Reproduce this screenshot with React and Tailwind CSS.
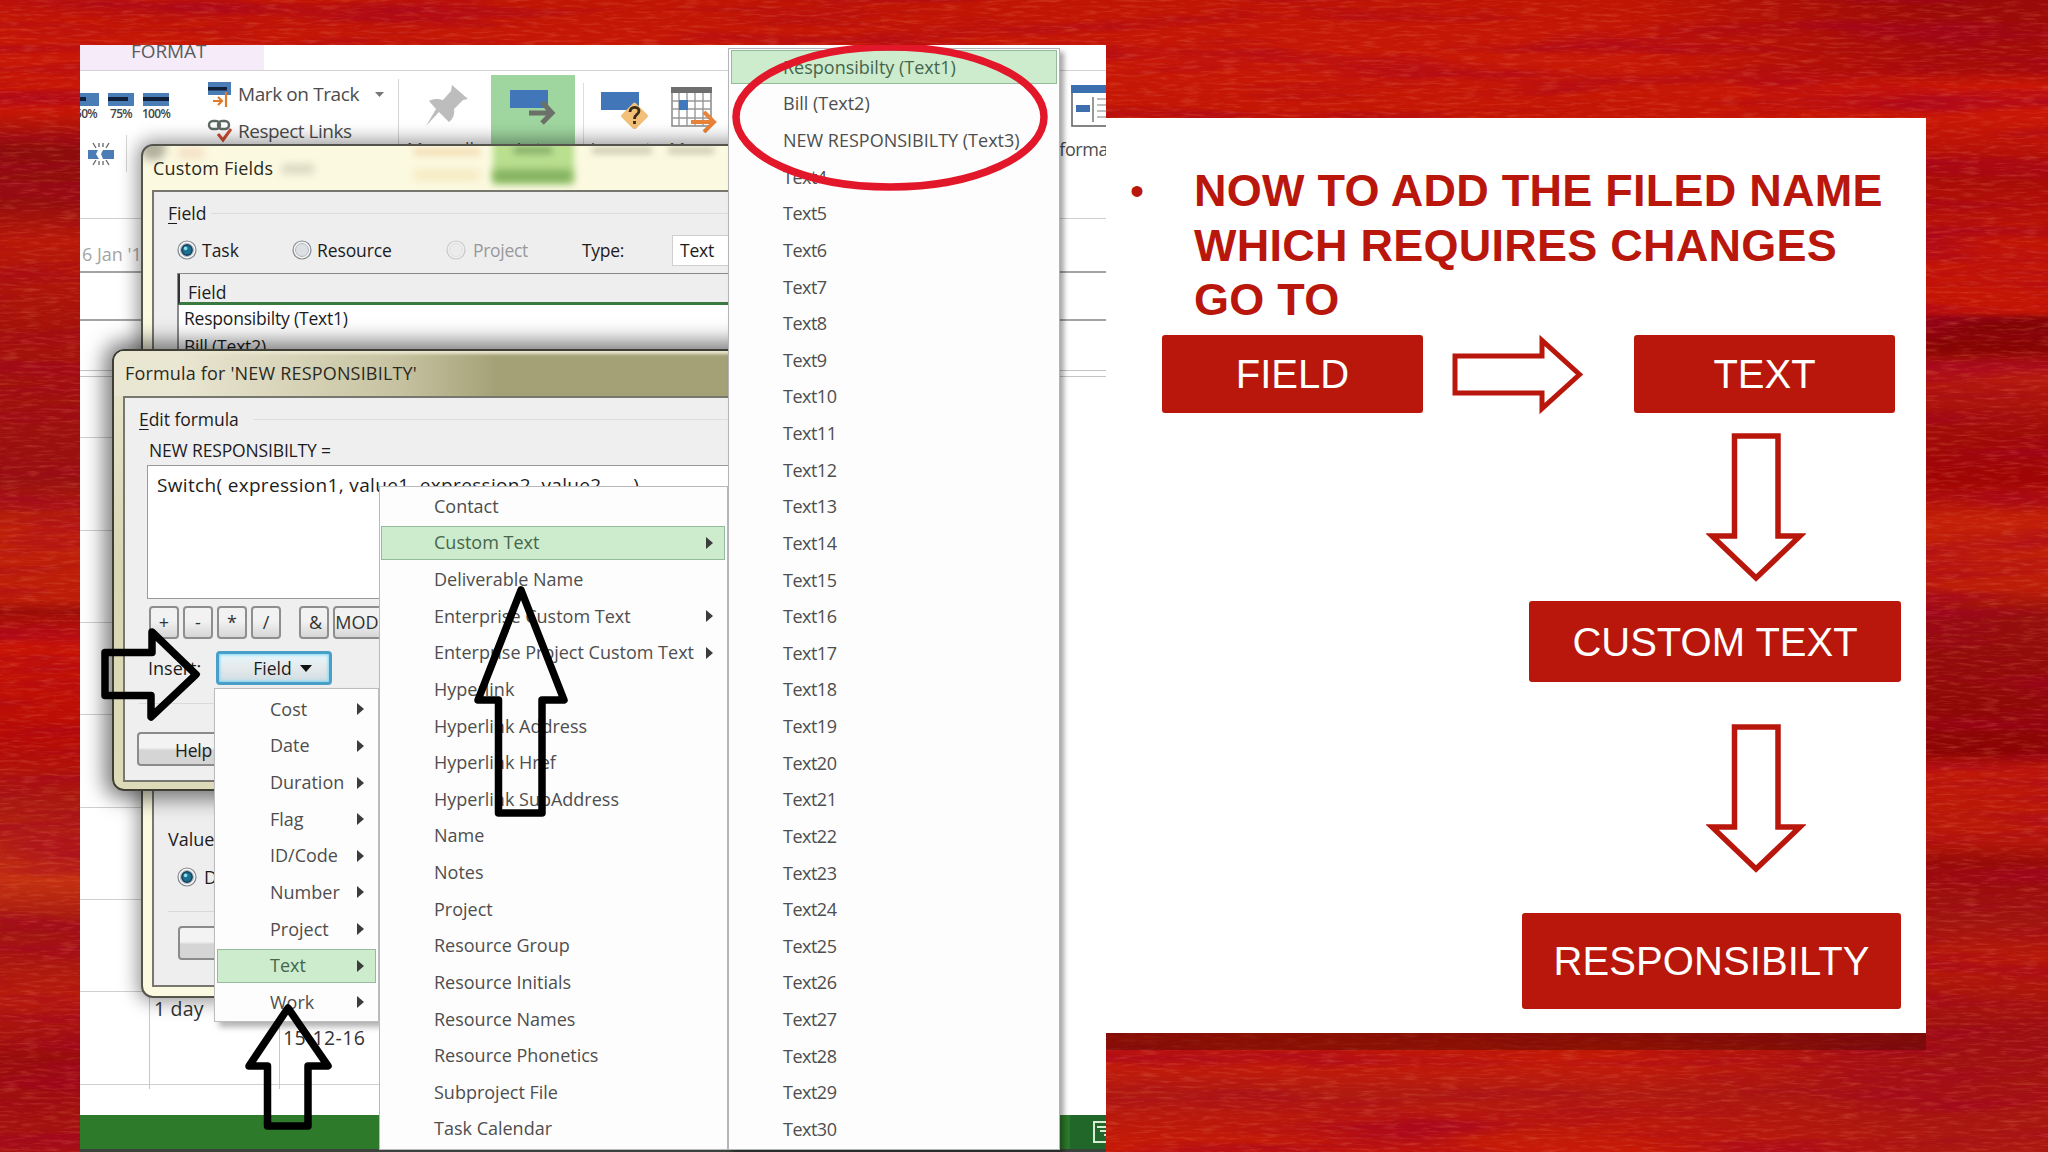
import clsx from "clsx";

const FIELD_MENU = ["Cost", "Date", "Duration", "Flag", "ID/Code", "Number", "Project", "Text", "Work"];

const TEXT_MENU = [
  { label: "Contact" },
  { label: "Custom Text", sub: true },
  { label: "Deliverable Name" },
  { label: "Enterprise Custom Text", sub: true },
  { label: "Enterprise Project Custom Text", sub: true },
  { label: "Hyperlink" },
  { label: "Hyperlink Address" },
  { label: "Hyperlink Href" },
  { label: "Hyperlink SubAddress" },
  { label: "Name" },
  { label: "Notes" },
  { label: "Project" },
  { label: "Resource Group" },
  { label: "Resource Initials" },
  { label: "Resource Names" },
  { label: "Resource Phonetics" },
  { label: "Subproject File" },
  { label: "Task Calendar" },
];

const CUSTOM_TEXT_MENU = [
  "Responsibilty (Text1)",
  "Bill (Text2)",
  "NEW RESPONSIBILTY (Text3)",
  ...Array.from({ length: 27 }, (_, i) => `Text${i + 4}`),
];

const GRID_LINES = [392, 485, 577, 669, 762, 854, 946, 1039];

function Caret() {
  return (
    <svg className="h-[12px] w-[7px]" viewBox="0 0 7 12" fill="#3c3c3c">
      <path d="M0 0L7 6L0 12Z" />
    </svg>
  );
}

function MenuItem({ children, active, sub, className }) {
  return (
    <div
      className={clsx(
        "flex h-[36.64px] items-center justify-between whitespace-nowrap text-[18px] text-[#4e4e4e]",
        className
      )}
    >
      <div
        className={clsx(
          "flex h-[34px] w-full items-center justify-between border",
          active ? "border-[#93bb9c] bg-[#cdeccd] text-[#46654b]" : "border-transparent"
        )}
      >
        <span>{children}</span>
        {sub && <Caret />}
      </div>
    </div>
  );
}

function Radio({ checked, disabled }) {
  return (
    <svg className="size-[20px] shrink-0" viewBox="0 0 20 20">
      <circle cx="10" cy="10" r="9" fill={disabled ? "#f1f1f1" : "#f4f6f8"} stroke={disabled ? "#c9c9c9" : "#84888c"} strokeWidth="1.2" />
      <circle cx="10" cy="10" r="6.5" fill={disabled ? "#ececec" : "#dcdfe3"} stroke={disabled ? "#dedede" : "#b4b8bc"} />
      {checked && <circle cx="10" cy="10" r="5.2" fill="#1d6f8f" stroke="#123f5c" strokeWidth="1.4" />}
      {checked && <circle cx="8.6" cy="8.4" r="1.8" fill="#8fe0ee" />}
    </svg>
  );
}

function Percent({ label, fill }) {
  return (
    <div className="flex w-[26px] shrink-0 flex-col items-center">
      <div className="h-[13px] w-[26px] bg-[#4a7db5] pt-[4px]">
        <div className={clsx("h-[4px] bg-[#10203a]", fill)} />
      </div>
      <span className="text-[12px] leading-[15px] font-semibold tracking-[-0.7px] text-[#444]">{label}</span>
    </div>
  );
}

function Ribbon() {
  return (
    <div className="relative h-[174px] w-[1026px] overflow-hidden border-b border-[#cfcfcf]">
      <div className="flex h-[26px] border-b border-[#d4d0d6]">
        <div className="h-[25px] w-[184px] overflow-hidden bg-[#f6ecf9] pl-[51px]">
          <div className="-mt-[7px] text-[19px] leading-[26px] tracking-[-0.1px] text-[#5c5c5c]">FORMAT</div>
        </div>
      </div>
      <div className="flex items-start">
        {/* percent complete + split task */}
        <div className="w-[127px] shrink-0">
          <div className="-ml-[7px] flex gap-[9px] pt-[22px]">
            <Percent label="50%" fill="w-[13px]" />
            <Percent label="75%" fill="w-[20px]" />
            <Percent label="100%" fill="w-[26px]" />
          </div>
          <div className="mt-[14px] flex items-center">
            <svg className="ml-[8px] h-[24px] w-[26px]" viewBox="0 0 26 24">
              <path d="M0 8H10L8 12L11 17H0ZM26 8H15L13 12L15 17H26Z" fill="#4a7db5" />
              <path d="M5 1L8 6M21 1L18 6M11 1V5M15 1V5M5 23L8 18M21 23L18 18M11 23V19M15 23V19" stroke="#666" strokeWidth="1.3" />
            </svg>
            <div className="ml-[12px] h-[37px] w-px bg-[#d5d5d5]" />
          </div>
        </div>
        <div className="w-[191px] shrink-0 pt-[9px]">
          <div className="flex h-[28px] items-center">
            <svg className="h-[27px] w-[25px]" viewBox="0 0 25 27">
              <rect x="1" y="1" width="23" height="13" fill="#4a7db5" />
              <rect x="1" y="6" width="19" height="3.5" fill="#10203a" />
              <path d="M6 20H15M11 16L15 20L11 24M19 11V26" fill="none" stroke="#e07b2c" strokeWidth="2.2" />
            </svg>
            <span className="ml-[6px] text-[19px] tracking-[-0.4px] text-[#4c4c4c]">Mark on Track</span>
            <svg className="ml-[16px] h-[5px] w-[9px]" viewBox="0 0 9 5"><path d="M0 0H9L4.5 5Z" fill="#777" /></svg>
          </div>
          <div className="mt-[9px] flex h-[28px] items-center">
            <svg className="h-[24px] w-[25px]" viewBox="0 0 25 24" fill="none">
              <rect x="2" y="2" width="11" height="8" rx="4" stroke="#5d6a64" strokeWidth="2.4" />
              <rect x="11" y="2" width="11" height="8" rx="4" stroke="#5d6a64" strokeWidth="2.4" />
              <path d="M11 15L16 21L24 10" stroke="#cf4a35" strokeWidth="3" />
            </svg>
            <span className="ml-[6px] text-[19px] tracking-[-0.5px] text-[#4c4c4c]">Respect Links</span>
          </div>
        </div>
        <div className="mt-[8px] h-[110px] w-px bg-[#d5d5d5]" />
        <div className="w-[92px] shrink-0 pt-[13px] text-center">
          <svg className="ml-[26px] h-[43px] w-[44px]" viewBox="0 0 44 43" fill="#bdbdbd">
            <path d="M27 1L43 15L38 16L29 25C30 30 28 35 24 38L14 28L1 42L11 25L4 17C9 14 14 15 18 16L26 7Z" />
          </svg>
          <div className="mt-[10px] text-[18px] leading-[24px] text-[#555]">Manually</div>
        </div>
        <div className="mt-[4px] h-[110px] w-[84px] shrink-0 bg-[#9fd59f] pt-[13px] text-center">
          <svg className="ml-[19px] h-[38px] w-[46px]" viewBox="0 0 46 38">
            <rect x="0" y="2" width="38" height="18" fill="#4177b8" />
            <path d="M19 25H41M32 14L42 25L32 35" fill="none" stroke="#6b7068" strokeWidth="5" />
          </svg>
          <div className="mt-[11px] text-[18px] leading-[24px] text-[#3f5c40]">Auto</div>
        </div>
        <div className="mt-[12px] ml-[8px] h-[110px] w-px bg-[#dedede]" />
        <div className="w-[74px] shrink-0 pt-[16px] text-center">
          <svg className="ml-[17px] h-[42px] w-[50px]" viewBox="0 0 50 42">
            <rect x="0" y="5" width="38" height="18" fill="#4177b8" />
            <rect x="23.5" y="19" width="20" height="20" rx="2" transform="rotate(45 33.5 29)" fill="#f2c078" />
            <path d="M29 25C29 19 38 19 38 24C38 28 33.5 27 33.5 32M33.5 34V37" fill="none" stroke="#3b2c18" strokeWidth="2.8" />
          </svg>
          <div className="mt-[8px] text-[18px] leading-[24px] text-[#555]">Inspect</div>
        </div>
        <div className="w-[76px] shrink-0 pt-[16px]">
          <svg className="ml-[13px] h-[46px] w-[48px]" viewBox="0 0 48 46">
            <rect x="1" y="1" width="39" height="38" fill="#fff" stroke="#888" strokeWidth="1.5" />
            <rect x="0" y="0" width="41" height="6" fill="#6e6e6e" />
            <path d="M8 6V39M16 6V39M24 6V39M32 6V39M1 14H40M1 22H40M1 31H40" stroke="#999" strokeWidth="1.4" />
            <rect x="8" y="13" width="9" height="10" fill="#3f78bc" />
            <path d="M20 35H43M33 25L43 35L33 45" fill="none" stroke="#e8833a" strokeWidth="4" />
          </svg>
          <div className="mt-[4px] pl-[11px] text-[18px] leading-[24px] text-[#555]">Move</div>
        </div>
        <div className="ml-[244px] w-[90px] shrink-0 pt-[14px]">
          <svg className="ml-[93px] h-[42px] w-[70px]" viewBox="0 0 70 42">
            <rect x="1" y="1" width="60" height="40" fill="#fff" stroke="#666" strokeWidth="1.6" />
            <rect x="0" y="0" width="70" height="8" fill="#3a70b0" />
            <rect x="5" y="20" width="14" height="7" fill="#3f6fae" />
            <path d="M22 12V37" stroke="#777" strokeWidth="1.5" />
            <path d="M26 14H60M26 20H60M26 26H60M26 32H60" stroke="#aaa" strokeWidth="1.4" />
          </svg>
          <div className="mt-[10px] pl-[66px] text-[18px] leading-[24px] tracking-[-0.4px] text-[#4c4c4c]">Information</div>
        </div>
      </div>
    </div>
  );
}

function CustomFieldsDialog() {
  return (
    <div className="absolute top-[99px] left-[61px] h-[854px] w-[620px] overflow-hidden rounded-[12px] border-2 border-[#55544c] bg-[#fbf9e0] pl-[9px] text-[#1c1c1c] shadow-[0_0_18px_4px_rgba(0,0,0,0.4)]">
      <div className="relative flex h-[44px] items-center">
        <div className="absolute top-[-8px] left-[-12px] h-[22px] w-[26px] rounded-full bg-[#6b6a5c]/50 blur-[4px]" />
        <div className="absolute top-[2px] left-[26px] h-[10px] w-[26px] bg-[#e8b79a]/40 blur-[4px]" />
        <div className="absolute top-[19px] left-[130px] h-[8px] w-[32px] bg-[#8a8872]/35 blur-[4px]" />
        <div className="absolute top-[2px] left-[262px] h-[8px] w-[66px] bg-[#f2cf9c]/60 blur-[3px]" />
        <div className="absolute top-[24px] left-[262px] h-[10px] w-[66px] bg-[#f2dca0]/50 blur-[4px]" />
        <div className="absolute -top-[6px] left-[341px] h-[44px] w-[81px] bg-[#b9df8f] blur-[3px]" />
        <div className="absolute top-[24px] left-[341px] h-[12px] w-[79px] bg-[#7fae5c] blur-[4px]" />
        <div className="absolute top-[1px] left-[362px] h-[7px] w-[38px] bg-[#6f9a58]/70 blur-[3px]" />
        <div className="absolute top-[1px] left-[440px] h-[7px] w-[60px] bg-[#8b8972]/40 blur-[3px]" />
        <div className="absolute top-[1px] left-[516px] h-[7px] w-[46px] bg-[#8b8972]/40 blur-[3px]" />
        <span className="relative pl-[1px] text-[18px] tracking-[0.2px] text-[#2a2a22]">Custom Fields</span>
      </div>
      <div className="h-[797px] border-2 border-[#77776f] bg-[#efeeef] pl-[14px]">
        <div className="flex items-center pt-[9px] text-[17.5px] leading-[24px]">
          <span><u className="underline-offset-3">F</u>ield</span>
          <div className="ml-[5px] h-px grow bg-[#dcdcdc]" />
        </div>
        <div className="mt-[9px] flex h-[32px] items-center pl-[9px] text-[17.5px]">
          <Radio checked />
          <span className="ml-[5px] w-[90px]">Task</span>
          <Radio />
          <span className="ml-[5px] w-[129px] tracking-[-0.1px]">Resource</span>
          <Radio disabled />
          <span className="ml-[7px] w-[109px] tracking-[-0.3px] text-[#999]">Project</span>
          <span className="w-[90px] tracking-[-0.3px]">Type:</span>
          <div className="h-[31px] w-[60px] border border-[#cfcfcf] bg-white pl-[7px] leading-[29px] tracking-[-0.2px]">Text</div>
        </div>
        <div className="mt-[7px] ml-[9px] h-[320px] border-t border-l-2 border-[#8a8a8a] bg-white text-[17.5px]">
          <div className="-ml-[1px] h-[31px] border-b-[3px] border-l-2 border-b-[#3a7a3f] border-l-[#333] bg-[#efeeef] pl-[8px] leading-[36px]">Field</div>
          <div className="pl-[5px] leading-[27px] tracking-[-0.2px]">
            <div>Responsibilty (Text1)</div>
            <div className="mt-[1px]">Bill (Text2)</div>
          </div>
        </div>
        <div className="mt-[231px] text-[18px] leading-[30px]">Values to display</div>
        <div className="mt-[8px] flex h-[30px] items-center pl-[9px] text-[18px]">
          <Radio checked />
          <span className="ml-[7px]">Data</span>
        </div>
        <div className="mt-[19px] h-px bg-[#d8d8d8]" />
        <div className="mt-[14px] ml-[10px] h-[34px] w-[120px] rounded-[4px] border-2 border-[#8b8b8b] bg-linear-to-b from-[#f3f3f3] from-45% to-[#d5d5d5] to-55%" />
      </div>
    </div>
  );
}

function OpButton({ children, className }) {
  return (
    <div
      className={clsx(
        "flex h-[33px] shrink-0 items-center justify-center rounded-[4px] border-2 border-[#8e8e8e] bg-linear-to-b from-[#f2f2f2] from-45% to-[#d6d6d6] text-[18px] text-[#333]",
        className
      )}
    >
      {children}
    </div>
  );
}

function FormulaDialog() {
  return (
    <div className="absolute top-[304px] left-[32px] h-[442px] w-[640px] overflow-hidden rounded-[12px] border-2 border-[#3f3e36] bg-linear-to-b from-[#e9e6cf] via-[#d9d6b4] to-[#dedbb9] pl-[9px] text-[#1c1c1c] shadow-[0_0_20px_8px_rgba(0,0,0,0.5)]">
      <div className="-ml-[9px] flex h-[45px] items-center bg-linear-to-r from-[#e9e6d2] from-10% via-[#c6c2a0] via-45% to-[#a5a177] to-60% pl-[11px] shadow-[inset_0_3px_3px_#e9e6d0]">
        <span className="text-[18px] tracking-[0.18px] whitespace-nowrap text-[#2a2a22]">Formula for 'NEW RESPONSIBILTY'</span>
      </div>
      <div className="h-[386px] border-2 border-[#77776f] bg-[#f0eff0] pl-[14px]">
        <div className="flex items-center pt-[8px] text-[17.5px] leading-[26px]">
          <span className="tracking-[-0.05px]"><u className="underline-offset-3">E</u>dit formula</span>
          <div className="ml-[14px] h-px grow bg-[#dedede]" />
        </div>
        <div className="mt-[6px] ml-[10px] text-[17.5px] leading-[24px] tracking-[-0.15px]">NEW RESPONSIBILTY =</div>
        <div className="mt-[3px] ml-[8px] h-[134px] border border-[#9a9a9a] bg-white pl-[9px] text-[19px] leading-[38px] tracking-[0.33px] whitespace-nowrap">
          Switch( expression1, value1, expression2, value2, ... )
        </div>
        <div className="mt-[7px] ml-[10px] flex gap-[4px]">
          <OpButton className="w-[30px]">+</OpButton>
          <OpButton className="w-[30px]">-</OpButton>
          <OpButton className="w-[30px]">*</OpButton>
          <OpButton className="w-[30px]">/</OpButton>
          <OpButton className="ml-[14px] w-[30px] pl-[3px]">&amp;</OpButton>
          <OpButton className="w-[50px] pr-[2px]">MOD</OpButton>
        </div>
        <div className="mt-[12px] flex h-[34px] items-center text-[18px]">
          <span className="w-[77px] pt-[1px] pl-[9px]">Insert:</span>
          <div className="flex h-[34px] w-[116px] items-center justify-center gap-[8px] rounded-[4px] border-[3px] border-[#4a9fc9] bg-linear-to-b from-[#e6f7fd] via-[#e5e9eb] to-[#cfdde3] pt-[1px] pl-[17px] text-[17.5px] shadow-[inset_0_0_3px_1px_#7fd8f5]">
            Field
            <svg className="h-[7px] w-[12px]" viewBox="0 0 12 7"><path d="M0 0H12L6 7Z" fill="#111" /></svg>
          </div>
        </div>
        <div className="mt-[18px] h-px bg-[#dadada]" />
        <div className="mt-[28px] ml-[-2px] h-[34px] w-[120px] rounded-[4px] border-2 border-[#8b8b8b] bg-linear-to-b from-[#f3f3f3] from-45% to-[#d5d5d5] to-55% pl-[36px] text-[17.5px] leading-[32px] tracking-[-0.2px]">
          Help
        </div>
      </div>
    </div>
  );
}

function ProjectWindow() {
  return (
    <div className="relative mt-[45px] h-[1107px] w-[1026px] shrink-0 overflow-hidden bg-white font-['Open_Sans','Noto_Sans',sans-serif]">
      <Ribbon />
      <div className="h-[54px] border-b-2 border-[#a3a3a3] pt-[20px] pl-[2px] text-[18px] leading-[30px] text-[#a5a5a5]">6 Jan '1</div>
      <div className="h-[48px] border-b-2 border-[#a3a3a3]" />
      <div className="mt-[49px] h-[7px] border-y border-[#c4c4c4]" />
      {GRID_LINES.map((y) => (
        <div key={y} className="absolute left-0 h-px w-[640px] bg-[#cfcfcf]" style={{ top: y }} />
      ))}
      <div className="absolute top-[940px] left-[69px] h-[104px] w-[131px] border-x border-[#c8c8c8] pt-[9px] pl-[4px] text-[19.5px] leading-[30px] tracking-[0.2px] text-[#333]">1 day</div>
      <div className="absolute top-[978px] left-[203px] text-[19.5px] leading-[30px] tracking-[0.35px] text-[#333]">15-12-16</div>
      <div className="absolute bottom-0 left-0 flex h-[37px] w-full justify-end border-b-3 border-[#3b423b] bg-[#2d7a2b]">
        <div className="w-[36px] bg-[#22672a] pt-[6px] pl-[23px]">
          <svg className="h-[22px] w-[24px]" viewBox="0 0 24 22" fill="none" stroke="#d6ecd4" strokeWidth="2">
            <path d="M24 1H1V21H24M4 6H14M7 10H14M11 14H16" />
          </svg>
        </div>
      </div>

      <CustomFieldsDialog />
      <FormulaDialog />

      {/* insert field > text > custom text */}
      <div className="absolute top-[643px] left-[134px] h-[334px] w-[165px] border border-[#bcbcbc] bg-[#fdfdfd] pt-[2px] shadow-[5px_5px_6px_rgba(0,0,0,0.3)]">
        {FIELD_MENU.map((label) => (
          <MenuItem key={label} active={label === "Text"} sub className="px-[2px] [&>div]:pr-[11px] [&>div]:pl-[52px]">
            {label}
          </MenuItem>
        ))}
      </div>
      <div className="absolute top-[441px] left-[299px] h-[664px] w-[349px] border border-[#b9b9bd] bg-[#fdfdfd] pt-[1px]">
        {TEXT_MENU.map(({ label, sub }) => (
          <MenuItem key={label} active={label === "Custom Text"} sub={sub} className="pr-[2px] pl-[1px] [&>div]:pr-[11px] [&>div]:pl-[52px]">
            {label}
          </MenuItem>
        ))}
      </div>
      <div className="absolute top-[3px] left-[648px] h-[1102px] w-[332px] border border-[#b4b4b8] bg-[#fdfdfd] shadow-[4px_4px_5px_rgba(0,0,0,0.35)]">
        {CUSTOM_TEXT_MENU.map((label, i) => (
          <MenuItem
            key={label}
            active={i === 0}
            className={clsx("px-[2px] [&>div]:pl-[51px]", i < 3 ? "tracking-[0px]" : "tracking-[-0.5px]")}
          >
            {label}
          </MenuItem>
        ))}
      </div>

      {/* hand-drawn marks over the window */}
      <svg className="absolute top-0 left-0 h-[1107px] w-[1027px]" viewBox="80 45 1027 1107" fill="none">
        <ellipse cx="890" cy="117" rx="154" ry="70" stroke="#e3172a" strokeWidth="7.5" />
        <g stroke="#000" strokeWidth="7.5" strokeLinejoin="round">
          <path d="M105 652.5H152V632L196 674.5L151 717V695.5H105Z" />
          <path d="M288 1008L328 1066H308V1126H267.5V1066H249Z" />
          <path d="M521 590L564 700H542V813H498.5V700H478Z" />
        </g>
      </svg>
    </div>
  );
}

function Box({ children, className }) {
  return (
    <div className={clsx("flex shrink-0 items-center justify-center rounded-[3px] bg-[#b9160c] text-[40px] text-white", className)}>
      {children}
    </div>
  );
}

function DownArrow({ className }) {
  return (
    <svg className={className} viewBox="0 0 100 150" fill="none" stroke="#b9160c" strokeWidth="5.5">
      <path d="M28.500 3H72V103H94L50 145L6 103H28.500Z" />
    </svg>
  );
}

function Steps() {
  return (
    <div className="mt-[118px] h-[915px] w-[820px] shrink-0 bg-white font-['Liberation_Sans',Arial,sans-serif] shadow-[0_17px_0_rgba(90,10,0,0.5)]">
      <div className="flex h-[217px] pt-[46px] text-[45px] leading-[54.5px] font-bold text-[#b9160c]">
        <span className="w-[88px] pl-[24px] text-[40px] font-normal">•</span>
        <div className="tracking-[0.25px] whitespace-nowrap">
          <p>NOW TO ADD THE FILED NAME</p>
          <p>WHICH REQUIRES CHANGES</p>
          <p>GO TO</p>
        </div>
      </div>
      <div className="flex h-[78px] items-center pl-[56px]">
        <Box className="h-[78px] w-[261px]">FIELD</Box>
        <svg className="ml-[29px] h-[86px] w-[132px]" viewBox="0 0 132 86" fill="none" stroke="#b9160c" strokeWidth="5">
          <path d="M3 25H90V9.5L127.5 43.5L90 77.5V62H3Z" />
        </svg>
        <Box className="ml-[50px] h-[78px] w-[261px]">TEXT</Box>
      </div>
      <div className="flex flex-col items-end pt-[20px] pr-[25px]">
        <DownArrow className="mr-[95px] h-[150px] w-[100px]" />
        <Box className="mt-[18px] h-[81px] w-[372px]">CUSTOM TEXT</Box>
        <DownArrow className="mt-[42px] mr-[95px] h-[150px] w-[100px]" />
        <Box className="mt-[39px] h-[96px] w-[379px] tracking-[0.1px]">RESPONSIBILTY</Box>
      </div>
    </div>
  );
}

function Backdrop() {
  return (
    <div className="absolute inset-0 bg-[linear-gradient(180deg,#c01504_0,#c81806_60px,#c41604_118px,#b81404_1033px,#c41a08_1060px,#b01a10_1095px,#bc180a_1125px,#c81a06_1152px)]">
      <div className="absolute inset-y-0 left-0 w-[120px] bg-[linear-gradient(180deg,transparent_0,#c81606_110px,#8c0c0c_150px,#960f0c_205px,#b81808_240px,#a5120a_330px,#981010_480px,#c02208_530px,#bc1c08_600px,#9c0c08_612px,#c81406_640px,#b80c04_740px,#a81810_800px,#c43010_880px,#a01410_930px,#b81c0c_1000px,#980c0c_1060px,#a81410_1152px)]" />
      <div className="absolute inset-y-0 right-0 w-[420px] bg-[linear-gradient(180deg,#980a08_0,#a80c08_70px,#cc1606_88px,#c81606_120px,#a80c08_180px,#c41605_250px,#c41405_312px,#800404_320px,#880404_350px,#b81a10_370px,#a00c08_430px,#a00404_480px,#c42008_520px,#bc1c08_588px,#960f0c_615px,#900a08_690px,#8c0404_752px,#c01808_770px,#b81808_840px,#980a08_862px,#a01410_920px,#b81808_960px,#9c1010_1030px,#ac1810_1152px)] [mask-image:linear-gradient(to_left,black_25%,transparent)]" />
      <svg className="absolute inset-0 size-full" width="2048" height="1152">
        <filter id="streaks" x="0" y="0" width="100%" height="100%">
          <feTurbulence type="fractalNoise" baseFrequency="0.004 0.045" numOctaves="5" seed="8" />
          <feColorMatrix values="0 0 0 0 0.36  0 0 0 0 0  0 0 0 0 0.02  2.6 0 0 0 -1.15" />
        </filter>
        <filter id="grain" x="0" y="0" width="100%" height="100%">
          <feTurbulence type="fractalNoise" baseFrequency="0.05 0.35" numOctaves="3" seed="21" />
          <feColorMatrix values="0 0 0 0 0.85  0 0 0 0 0.2  0 0 0 0 0.1  0 2 0 0 -0.95" />
        </filter>
        <rect width="2048" height="1152" filter="url(#streaks)" opacity="0.6" />
        <rect width="2048" height="1152" filter="url(#grain)" opacity="0.35" />
      </svg>
    </div>
  );
}

export default function App() {
  return (
    <div className="relative h-[1152px] w-[2048px] overflow-hidden">
      <Backdrop />
      <main className="relative flex items-start pl-[80px]">
        <ProjectWindow />
        <Steps />
      </main>
    </div>
  );
}
